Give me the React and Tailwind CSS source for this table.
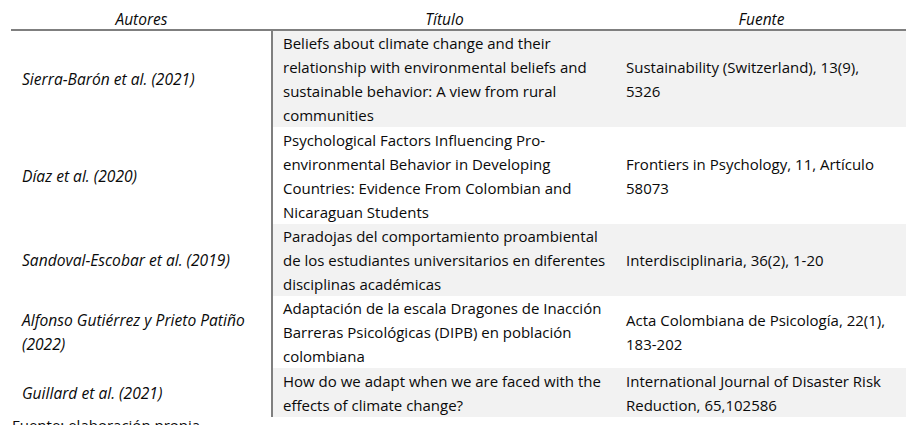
import React from "react";

const rows = [
  {
    h: "h-[96px]",
    bg: true,
    a: ["Sierra-Barón et al. (2021)"],
    t: ["Beliefs about climate change and their", "relationship with environmental beliefs and", "sustainable behavior: A view from rural", "communities"],
    f: ["Sustainability (Switzerland), 13(9),", "5326"],
  },
  {
    h: "h-[97px]",
    bg: false,
    a: ["Díaz et al. (2020)"],
    t: ["Psychological Factors Influencing Pro-", "environmental Behavior in Developing", "Countries: Evidence From Colombian and", "Nicaraguan Students"],
    f: ["Frontiers in Psychology, 11, Artículo", "58073"],
  },
  {
    h: "h-[72px]",
    bg: true,
    a: ["Sandoval-Escobar et al. (2019)"],
    t: ["Paradojas del comportamiento proambiental", "de los estudiantes universitarios en diferentes", "disciplinas académicas"],
    f: ["Interdisciplinaria, 36(2), 1-20"],
  },
  {
    h: "h-[72px]",
    bg: false,
    a: ["Alfonso Gutiérrez y Prieto Patiño", "(2022)"],
    t: ["Adaptación de la escala Dragones de Inacción", "Barreras Psicológicas (DIPB) en población", "colombiana"],
    f: ["Acta Colombiana de Psicología, 22(1),", "183-202"],
  },
  {
    h: "h-[49px]",
    bg: true,
    a: ["Guillard et al. (2021)"],
    t: ["How do we adapt when we are faced with the", "effects of climate change?"],
    f: ["International Journal of Disaster Risk", "Reduction, 65,102586"],
  },
];

function Lines({ lines }) {
  return lines.map((l, i) => (
    <div key={i} className="whitespace-nowrap">
      {l}
    </div>
  ));
}

export default function App() {
  return (
    <div
      className="w-[915px] h-[425px] overflow-hidden bg-white text-[#0a0a0a] text-[15px] leading-[24px]"
      style={{ fontFamily: "'Open Sans', 'Noto Sans', sans-serif" }}
    >
      <div className="ml-[11px] w-[895px]">
        <div className="flex pt-[7px] h-[31px] italic text-[15.5px] border-b-2 border-[#7f7f7f] leading-[24px]">
          <div className="w-[261px] text-center">Autores</div>
          <div className="w-[345px] text-center">Título</div>
          <div className="flex-1 text-center">Fuente</div>
        </div>
        {rows.map((r, i) => (
          <div key={i} className={`flex ${r.h}`}>
            <div className="w-[260px] flex flex-col justify-center pl-[11px] italic text-[15.6px]">
              <Lines lines={r.a} />
            </div>
            <div
              className={`w-[346px] flex flex-col justify-center border-l-2 border-[#7f7f7f] pl-[10px] ${
                r.bg ? "bg-[#f2f2f2]" : "bg-white"
              }`}
            >
              <Lines lines={r.t} />
            </div>
            <div
              className={`flex-1 flex flex-col justify-center pl-[9px] ${
                r.bg ? "bg-[#f2f2f2]" : "bg-white"
              }`}
            >
              <Lines lines={r.f} />
            </div>
          </div>
        ))}
        <div className="pl-[1px] leading-[16px] text-[15px]">Fuente: elaboración propia.</div>
      </div>
    </div>
  );
}
